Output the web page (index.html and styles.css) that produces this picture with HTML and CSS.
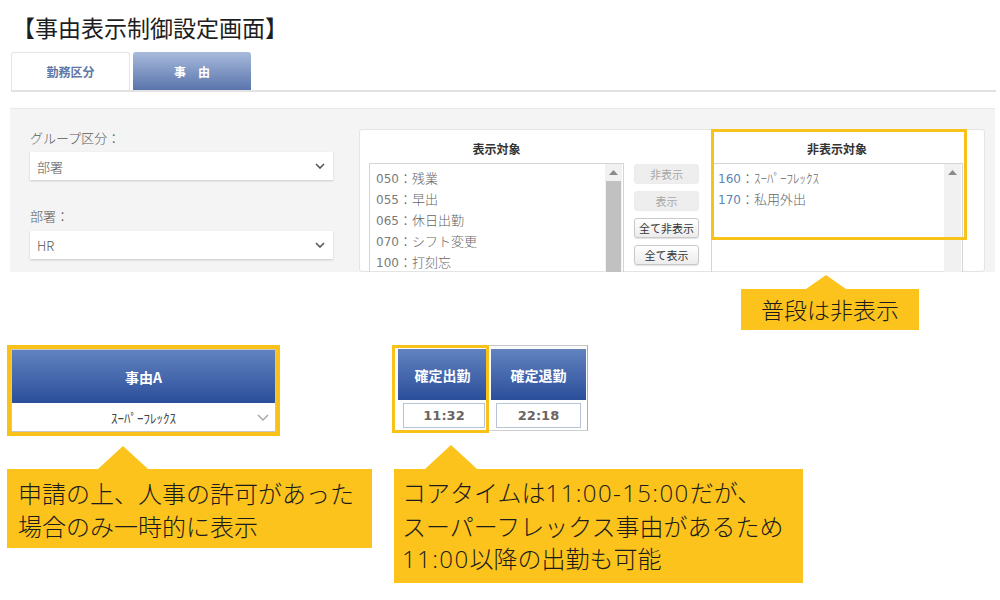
FILE: index.html
```html
<!DOCTYPE html>
<html lang="ja">
<head>
<meta charset="utf-8">
<title>事由表示制御設定画面</title>
<link rel="stylesheet" href="styles.css">
</head>
<body>
<div class="page">
  <h1 class="title">【事由表示制御設定画面】</h1>

  <div class="shot">
    <div class="tabs">
      <div class="tab tab-off">勤務区分</div>
      <div class="tab tab-on">事　由</div>
    </div>

    <div class="panel">
      <div class="filters">
        <div class="label">グループ区分：</div>
        <div class="select"><span>部署</span>
          <svg class="chev" width="10" height="6" viewBox="0 0 10 6"><path d="M1 1l4 4 4-4" fill="none" stroke="#555" stroke-width="1.6"/></svg>
        </div>
        <div class="label label-2">部署：</div>
        <div class="select select-2"><span>HR</span>
          <svg class="chev" width="10" height="6" viewBox="0 0 10 6"><path d="M1 1l4 4 4-4" fill="none" stroke="#555" stroke-width="1.6"/></svg>
        </div>
      </div>

      <div class="card">
        <div class="col">
          <div class="col-head">表示対象</div>
          <div class="list">
            <ul class="items">
              <li><span class="num">050</span>：残業</li>
              <li><span class="num">055</span>：早出</li>
              <li><span class="num">065</span>：休日出勤</li>
              <li><span class="num">070</span>：シフト変更</li>
              <li><span class="num">100</span>：打刻忘</li>
            </ul>
            <div class="sbar">
              <div class="sarrow"><svg width="9" height="5" viewBox="0 0 9 5"><path d="M0 5L4.5 0 9 5z" fill="#8a8a8a"/></svg></div>
              <div class="sthumb"></div>
            </div>
          </div>
        </div>

        <div class="btns">
          <div class="btn btn-dis">非表示</div>
          <div class="btn btn-dis">表示</div>
          <div class="btn">全て非表示</div>
          <div class="btn">全て表示</div>
        </div>

        <div class="col col-right">
          <div class="col-head">非表示対象</div>
          <div class="list">
            <ul class="items">
              <li><span class="num num-blue">160</span>：ｽｰﾊﾟｰﾌﾚｯｸｽ</li>
              <li><span class="num num-blue">170</span>：私用外出</li>
            </ul>
            <div class="sbar">
              <div class="sarrow"><svg width="9" height="5" viewBox="0 0 9 5"><path d="M0 5L4.5 0 9 5z" fill="#8a8a8a"/></svg></div>
            </div>
          </div>
          <div class="hl hl-right"></div>
        </div>
      </div>
    </div>
  </div>

  <div class="callout callout-note">
    <div class="tri tri-note"></div>
    <div class="cbox cbox-note">普段は非表示</div>
  </div>

  <div class="bottom">
    <div class="group group-left">
      <div class="reason">
        <div class="reason-inner">
          <div class="reason-head">事由A</div>
          <div class="reason-row"><span>ｽｰﾊﾟｰﾌﾚｯｸｽ</span>
            <svg class="chev-r" width="12" height="7" viewBox="0 0 12 7"><path d="M1 1l5 5 5-5" fill="none" stroke="#aaa" stroke-width="1.5"/></svg>
          </div>
        </div>
      </div>
      <div class="callout">
        <div class="tri tri-left"></div>
        <div class="cbox cbox-left">申請の上、人事の許可があった<br>場合のみ一時的に表示</div>
      </div>
    </div>

    <div class="group group-right">
      <div class="times">
        <div class="times-head">
          <div class="th th-1">確定出勤</div>
          <div class="th th-2">確定退勤</div>
        </div>
        <div class="times-row">
          <div class="td td-1"><div class="tin">11:32</div></div>
          <div class="td td-2"><div class="tin">22:18</div></div>
        </div>
        <div class="hl hl-time"></div>
      </div>
      <div class="callout">
        <div class="tri tri-right"></div>
        <div class="cbox cbox-right">コアタイムは<span class="digits">11:00-15:00</span>だが、<br>スーパーフレックス事由があるため<br><span class="digits">11:00</span>以降の出勤も可能</div>
      </div>
    </div>
  </div>
</div>
</body>
</html>
```

FILE: styles.css
```css
* { box-sizing: border-box; }

body {
  margin: 0;
  background: #fff;
  font-family: "Noto Sans CJK JP", "Noto Sans", sans-serif;
  color: #222;
}

.page {
  width: 1000px;
  height: 600px;
  overflow: hidden;
}

.title {
  margin: 12px 0 0 12px;
  font-size: 23px;
  font-weight: 400;
  line-height: 30px;
  color: #1e1e1e;
}

/* ---------- screenshot block ---------- */
.shot {
  margin: 10px 0 0 10px;
  width: 986px;
}

.tabs {
  display: flex;
  gap: 3px;
  margin-left: 1px;
  height: 40px;
  border-bottom: 2px solid #e2e2e2;
}

.tab {
  width: 119px;
  height: 38px;
  display: flex;
  align-items: center;
  justify-content: center;
  font-size: 12px;
  font-weight: 700;
  border-radius: 3px 3px 0 0;
}

.tab-off {
  background: #fff;
  border: 1px solid #e6e6e6;
  border-bottom: none;
  color: #6178a6;
}

.tab-on {
  width: 118px;
  background: linear-gradient(#a8badc, #5a75ac);
  color: #fff;
}

.panel {
  margin-top: 16px;
  width: 985px;
  height: 164px;
  overflow: hidden;
  background: #f4f4f4;
  border-top: 1px solid #e9e9e9;
  display: flex;
  gap: 26px;
  padding: 20px 10px 0 20px;
}

.filters {
  width: 303px;
  flex: none;
}

.label {
  font-size: 13px;
  line-height: 18px;
  color: #5a5a5a;
  font-weight: 300;
}

.label-2 { margin-top: 27px; }

.select {
  margin-top: 5px;
  height: 28px;
  background: #fff;
  box-shadow: 0 1px 2px rgba(0, 0, 0, 0.18);
  display: flex;
  align-items: center;
  justify-content: space-between;
  padding: 0 8px 0 7px;
  font-size: 13px;
  font-weight: 300;
  color: #555;
}

.select-2 { margin-top: 6px; }

.card {
  flex: 1;
  background: #fff;
  border: 1px solid #e4e4e4;
  border-radius: 3px;
  display: flex;
  padding-left: 9px;
}

.col {
  width: 255px;
  flex: none;
}

.col-right {
  width: 252px;
  margin-left: 12px;
  position: relative;
}

.col-head {
  height: 33px;
  padding-top: 4px;
  line-height: 29px;
  text-align: center;
  font-size: 12px;
  font-weight: 700;
  color: #333;
}

.list {
  height: 140px;
  border: 1px solid #d4d4d4;
  display: flex;
}

.items {
  flex: 1;
  list-style: none;
  margin: 0;
  padding: 3px 0 0 6px;
  font-size: 13px;
  font-weight: 300;
  color: #666;
}

.items li {
  height: 21px;
  line-height: 21px;
  white-space: nowrap;
  overflow: hidden;
}

.num {
  font-family: "DejaVu Sans", "Noto Sans", sans-serif;
  font-size: 12px;
  font-weight: 400;
  color: #7a7a7a;
}

.num-blue { color: #5a86b2; }

.sbar {
  width: 17px;
  margin-right: 1px;
  background: #f1f1f1;
  display: flex;
  flex-direction: column;
}

.sarrow {
  height: 17px;
  display: flex;
  align-items: center;
  justify-content: center;
}

.sthumb {
  flex: 1;
  margin: 0 1px;
  background: #c1c1c1;
}

.btns {
  width: 65px;
  margin-left: 10px;
  padding-top: 34px;
  display: flex;
  flex-direction: column;
  gap: 7px;
}

.btn {
  height: 20px;
  display: flex;
  align-items: center;
  justify-content: center;
  font-size: 11px;
  color: #333;
  background: linear-gradient(#ffffff, #ececec);
  border: 1px solid #c9c9c9;
  border-radius: 3px;
  box-shadow: 0 1px 1px rgba(0, 0, 0, 0.12);
}

.btn-dis {
  color: #a8a8a8;
  background: #eeeeee;
  border-color: #ececec;
  box-shadow: none;
}

.hl {
  position: absolute;
  border: 3px solid #f8c21b;
}

.hl-right {
  top: -1px;
  left: 0;
  width: 256px;
  height: 111px;
}

/* ---------- callouts ---------- */
.callout {
  display: flex;
  flex-direction: column;
  align-items: flex-start;
}

.tri {
  width: 0;
  height: 0;
  border-style: solid;
  border-color: transparent transparent #fbc31c transparent;
}

.cbox {
  background: #fbc31c;
  color: #1c1c1c;
  font-size: 24px;
  font-weight: 300;
  line-height: 32.5px;
}

.digits {
  font-family: "Open Sans", "Noto Sans", sans-serif;
  font-weight: 300;
  letter-spacing: 1.4px;
}

.callout-note {
  margin: 3px 0 0 741px;
}

.tri-note {
  margin-left: 65px;
  border-width: 0 20px 14px 20px;
}

.cbox-note {
  width: 178px;
  height: 41px;
  font-size: 23px;
  line-height: 41px;
  text-align: center;
}

.bottom {
  display: flex;
  gap: 22px;
  margin-top: 15px;
  padding-left: 7px;
}

.group-left { width: 365px; }

.reason {
  width: 273px;
  border: 4px solid #f8c21b;
}

.reason-inner {
  border: 1px solid #c6c6c6;
}

.reason-head {
  height: 53px;
  background: linear-gradient(#6183bf, #2b4e9b);
  color: #fff;
  font-size: 14px;
  font-weight: 700;
  display: flex;
  align-items: center;
  justify-content: center;
}

.reason-row {
  height: 28px;
  background: #fff;
  position: relative;
  display: flex;
  align-items: center;
  justify-content: center;
  font-size: 13px;
  color: #444;
}

.chev-r {
  position: absolute;
  right: 6px;
  top: 11px;
}

.tri-left {
  margin: 10px 0 0 91px;
  border-width: 0 25px 23px 25px;
}

.cbox-left {
  width: 365px;
  padding: 8px 0 6px 11px;
}

.group-right {
  width: 409px;
}

.times {
  position: relative;
  width: 193px;
  margin-left: 1px;
  border-top: 1px solid #c4c4c4;
  border-right: 1px solid #b0b0b0;
  padding-top: 3px;
  background: #fbfbfb;
}

.times-head {
  display: flex;
  gap: 4px;
  padding-left: 3px;
}

.th {
  height: 51px;
  background: linear-gradient(#6183bf, #2b4e9b);
  color: #fff;
  font-size: 14px;
  font-weight: 700;
  display: flex;
  align-items: center;
  justify-content: center;
}

.th-1 { width: 89px; }
.th-2 { width: 95px; }

.times-row {
  display: flex;
  gap: 4px;
  padding-left: 3px;
  height: 31px;
  border-bottom: 1px solid #cfcfcf;
  background: #fff;
}

.td {
  display: flex;
  align-items: center;
  justify-content: center;
}

.td-1 { width: 89px; }
.td-2 { width: 95px; }

.tin {
  height: 25px;
  border: 1px solid #b7c3d9;
  background: #fff;
  display: flex;
  align-items: center;
  justify-content: center;
  font-family: "DejaVu Sans", "Liberation Sans", sans-serif;
  font-size: 13px;
  font-weight: 700;
  color: #6a6563;
}

.td-1 .tin { width: 82px; margin-left: 3px; }
.td-2 .tin { width: 85px; }

.hl-time {
  top: -1px;
  left: -3px;
  width: 97px;
  height: 88px;
}

.tri-right {
  margin: 14px 0 0 31px;
  border-width: 0 26px 24px 26px;
}

.cbox-right {
  width: 409px;
  padding: 7px 0 7px 8px;
}
```
